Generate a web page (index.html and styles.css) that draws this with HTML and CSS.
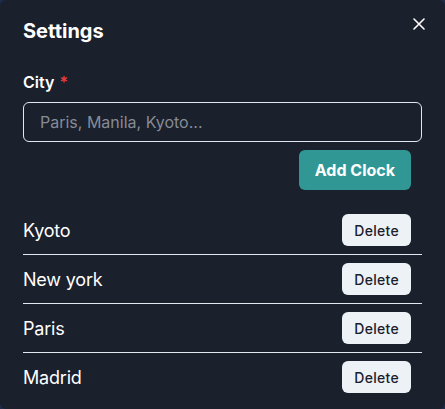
FILE: index.html
```html
<!DOCTYPE html>
<html>
<head>
<meta charset="utf-8">
<link rel="stylesheet" href="styles.css">
</head>
<body>
<div class="modal">
  <header class="header">
    <h2 class="title">Settings</h2>
    <button class="close" aria-label="Close">
      <svg width="12" height="12" viewBox="0 0 12 12"><path d="M1 1L11 11M11 1L1 11" stroke="#fff" stroke-width="1.6" stroke-linecap="round"/></svg>
    </button>
  </header>
  <div class="body">
    <label class="label">City <span class="req">*</span></label>
    <div class="input">Paris, Manila, Kyoto...</div>
    <div class="actions"><button class="add">Add Clock</button></div>
    <ul class="list">
      <li class="row"><span class="city">Kyoto</span><button class="del">Delete</button></li>
      <li class="row"><span class="city">New york</span><button class="del">Delete</button></li>
      <li class="row"><span class="city">Paris</span><button class="del">Delete</button></li>
      <li class="row last"><span class="city">Madrid</span><button class="del">Delete</button></li>
    </ul>
  </div>
</div>
</body>
</html>
```
FILE: styles.css
```css
html, body {
  margin: 0;
  padding: 0;
  background: #1d2c4a;
  font-family: Inter, "Noto Sans", sans-serif;
}
.modal {
  width: 445px;
  height: 409px;
  background: #1a202c;
  border-radius: 6px;
  color: #fff;
  box-sizing: border-box;
  position: relative;
}
.header {
  padding: 16px 23px;
}
.title {
  margin: 0;
  font-size: 20px;
  line-height: 30px;
  font-weight: 700;
}
.close {
  position: absolute;
  top: 8px;
  right: 10px;
  width: 32px;
  height: 32px;
  border: 0;
  background: transparent;
  display: flex;
  align-items: center;
  justify-content: center;
  padding: 0;
}
.body {
  padding: 8px 23px;
}
.label {
  display: block;
  font-size: 16px;
  line-height: 24px;
  font-weight: 600;
  margin-bottom: 8px;
}
.req {
  color: #e53e3e;
  margin-left: 1px;
}
.input {
  height: 40px;
  box-sizing: border-box;
  border: 1px solid #e2e8f0;
  border-radius: 6px;
  padding: 0 16px;
  display: flex;
  align-items: center;
  font-size: 16px;
  color: #868c96;
}
.actions {
  display: flex;
  justify-content: flex-end;
  margin-top: 8px;
  padding-right: 11px;
}
.add {
  height: 40px;
  padding: 0 16px;
  border: 0;
  border-radius: 6px;
  background: #319795;
  color: #fff;
  font-family: inherit;
  font-size: 16px;
  font-weight: 700;
}
.list {
  list-style: none;
  margin: 16px 0 0;
  padding: 0;
}
.row {
  display: flex;
  justify-content: space-between;
  align-items: center;
  padding: 8px 11px 8px 0;
  border-bottom: 1px solid #e2e8f0;
}
.row.last {
  border-bottom: 0;
}
.city {
  font-size: 18px;
  line-height: 27px;
  letter-spacing: -0.2px;
}
.del {
  height: 32px;
  padding: 0 12px;
  border: 0;
  border-radius: 6px;
  background: #edf2f7;
  color: #1a202c;
  font-family: inherit;
  font-size: 14px;
  font-weight: 500;
  letter-spacing: 0.3px;
}
```
